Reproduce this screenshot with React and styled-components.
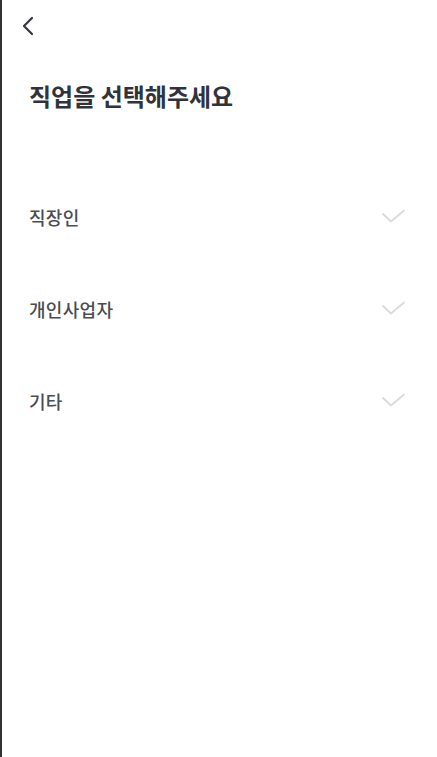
import React, { useState } from "react"
import styled, { createGlobalStyle } from "styled-components"

const GlobalStyle = createGlobalStyle`
  body {
    margin: 0;
    background: #fff;
    font-family: "Noto Sans CJK KR", "Noto Sans", sans-serif;
  }
`;

const Page = styled.div`
  min-height: 100vh;
  box-sizing: border-box;
  border-left: 2px solid #333;
  background: #fff;
`;

const Header = styled.div`
  height: 52px;
  display: flex;
  align-items: center;
  padding-left: 17px;
`;

const BackButton = styled.button`
  border: 0;
  background: none;
  padding: 0;
  width: 18px;
  height: 24px;
  display: flex;
  align-items: center;
  justify-content: center;
  cursor: pointer;
`;

const Title = styled.h1`
  margin: 28px 0 0;
  padding-left: 27px;
  font-size: 24px;
  line-height: 32px;
  font-weight: 700;
  color: #30343a;
  letter-spacing: 0;
`;

const List = styled.ul`
  list-style: none;
  margin: 59px 0 0;
  padding: 0 30px 0 27px;
`;

const Item = styled.li`
  height: 92px;
  display: flex;
  align-items: center;
  justify-content: space-between;
  cursor: pointer;
`;

const Label = styled.span`
  font-size: 18px;
  font-weight: 500;
  color: ${(p) => (p.selected ? "#222" : "#4a4d52")};
  letter-spacing: 0.3px;
`;

const Check = ({ on }) => (
  <svg width="26" height="16" viewBox="0 0 26 16">
    <path
      d="M2 5 L10 12.5 L23 1.5"
      fill="none"
      stroke={on ? "#4a6cf7" : "#d9dadd"}
      strokeWidth="1.8"
      strokeLinecap="round"
      strokeLinejoin="round"
    />
  </svg>
);

const jobs = ["직장인", "개인사업자", "기타"];

const App = () => {
  const [selected, setSelected] = useState(null);
  return (
    <Page>
      <GlobalStyle />
      <Header>
        <BackButton aria-label="뒤로">
          <svg width="12" height="20" viewBox="0 0 12 20">
            <path
              d="M10 2 L2 10 L10 18"
              fill="none"
              stroke="#33363b"
              strokeWidth="2.2"
              strokeLinecap="round"
              strokeLinejoin="round"
            />
          </svg>
        </BackButton>
      </Header>
      <Title>직업을 선택해주세요</Title>
      <List>
        {jobs.map((job) => (
          <Item key={job} onClick={() => setSelected(job)}>
            <Label selected={selected === job}>{job}</Label>
            <Check on={selected === job} />
          </Item>
        ))}
      </List>
    </Page>
  );
};

export default App
